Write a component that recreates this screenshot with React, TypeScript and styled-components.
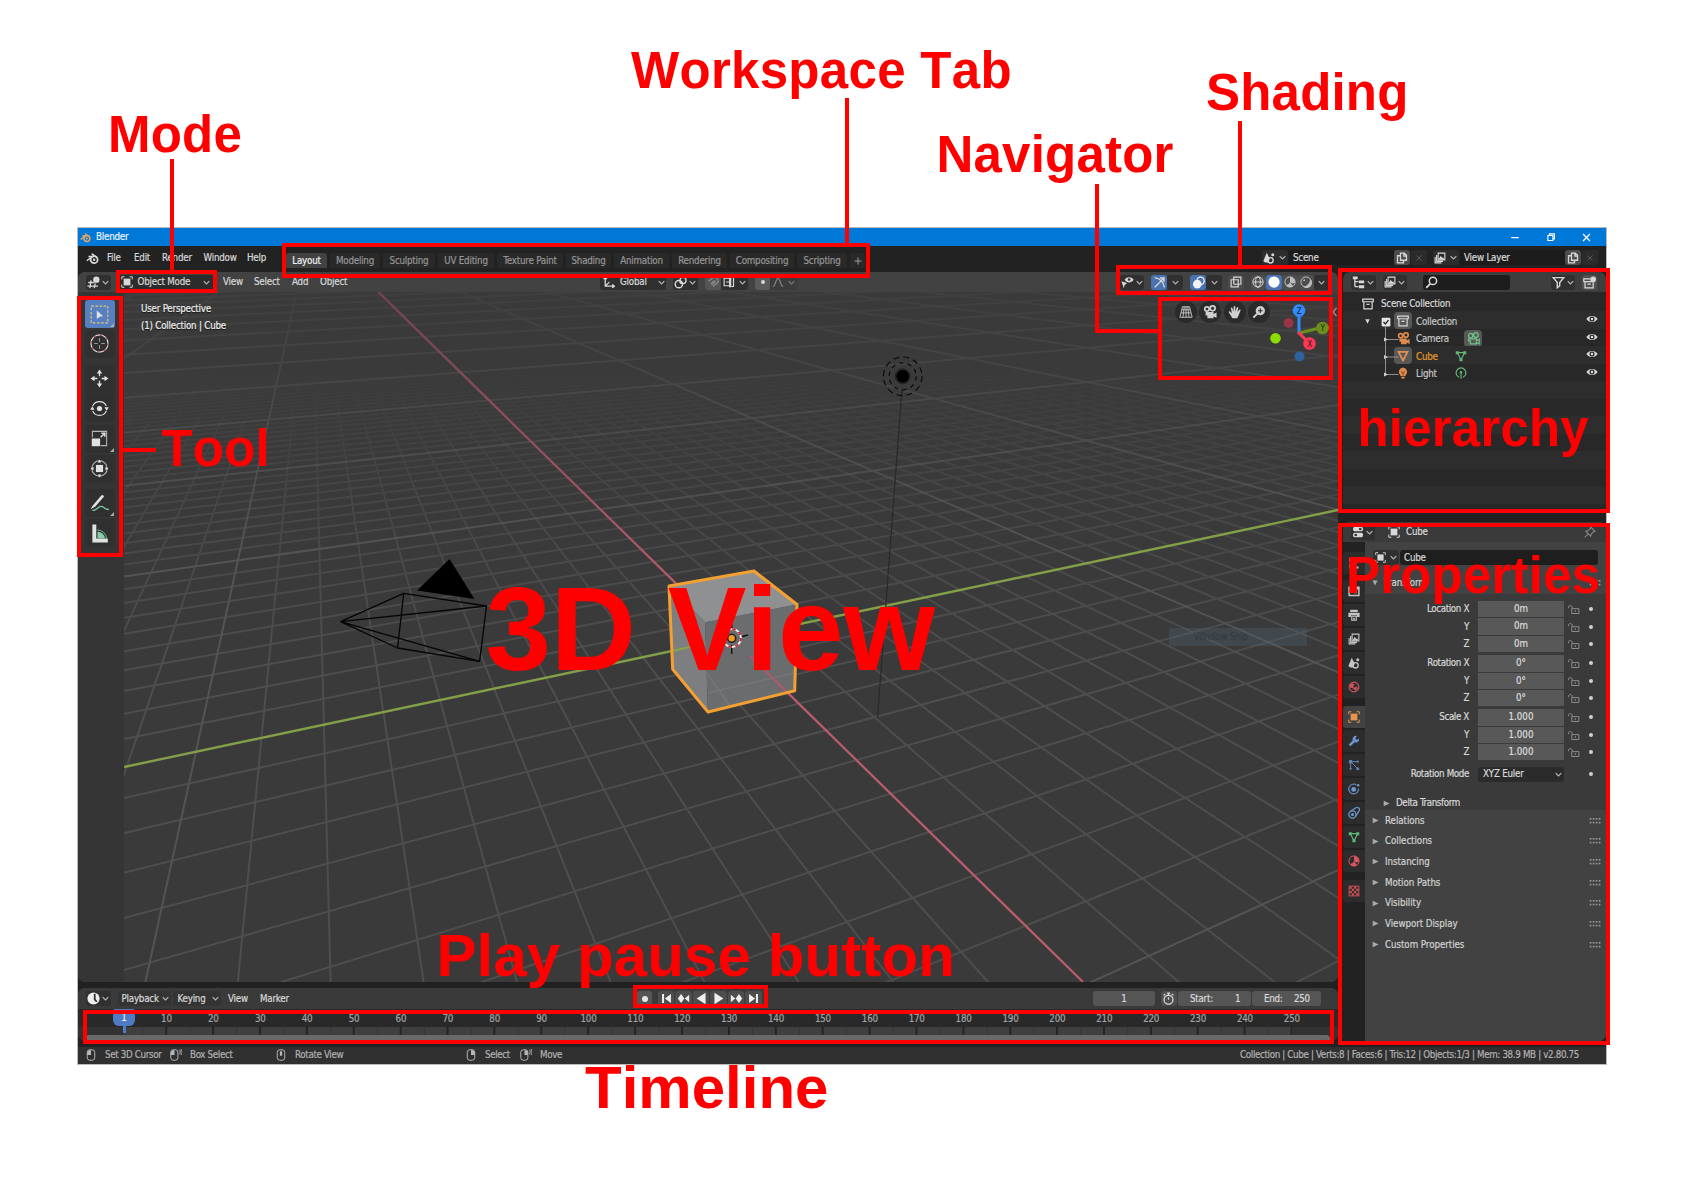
import React from "react";
import styled, { createGlobalStyle } from "styled-components";

const Global = createGlobalStyle`
  html, body { margin: 0; padding: 0; background: #fff; }
  * { box-sizing: border-box; }
`;

/* ---------- shell ---------- */

const Page = styled.div`
  position: relative;
  width: 1684px;
  height: 1190px;
  overflow: hidden;
  padding: 228px 0 0 78px;
  background: #fff;
`;

const AppWindow = styled.div`
  width: 1528px;
  height: 836px;
  display: flex;
  flex-direction: column;
  background: #212121;
  color: #d8d8d8;
  font-family: "DejaVu Sans Condensed", "DejaVu Sans", sans-serif;
  font-stretch: condensed;
  font-size: 9.7px;
  letter-spacing: -0.2px;
  line-height: 14px;
  white-space: nowrap;
  -webkit-text-stroke: 0.2px currentColor;
  box-shadow: 0 0 0 1px #b9b9b9;
`;

const TitleBar = styled.div`
  height: 18px;
  flex: none;
  display: flex;
  align-items: center;
  background: #0078d7;
  color: #e8f3fc;
  padding: 0 14.5px 0 2px;
`;

const TitleText = styled.span`
  flex: 1;
  padding-left: 5px;
`;

const WinButton = styled.span`
  width: 36px;
  display: flex;
  justify-content: flex-end;
`;

const TopBar = styled.div`
  height: 26px;
  flex: none;
  display: flex;
  align-items: flex-start;
  background: #222;
  padding: 4px 8px 0 8px;
`;

const Fixed = styled.span<{ w?: number; ml?: number }>`
  flex: none;
  width: ${(p) => (p.w ? p.w + "px" : "auto")};
  margin-left: ${(p) => p.ml || 0}px;
  display: flex;
  align-items: center;
  min-height: 16px;
`;

const Tab = styled.span<{ w: number; active?: boolean }>`
  flex: none;
  width: ${(p) => p.w}px;
  height: 15px;
  margin: 3px 3px 0 0;
  display: flex;
  align-items: center;
  justify-content: center;
  border-radius: 3px 3px 0 0;
  background: ${(p) => (p.active ? "#424242" : "#292929")};
  color: ${(p) => (p.active ? "#f0f0f0" : "#969696")};
`;

const Main = styled.div`
  height: 772px;
  flex: none;
  display: flex;
  gap: 5px;
`;

const LeftColumn = styled.div`
  width: 1260px;
  display: flex;
  flex-direction: column;
  gap: 6px;
`;

const RightColumn = styled.div`
  flex: 1;
  display: flex;
  flex-direction: column;
  gap: 11px;
`;

const Editor = styled.section<{ h: number; bg?: string }>`
  height: ${(p) => p.h}px;
  flex: none;
  display: flex;
  flex-direction: column;
  border-radius: 7px;
  overflow: hidden;
  background: ${(p) => p.bg || "#3a3a3a"};
`;

const Header = styled.div<{ h?: number; bg?: string }>`
  height: ${(p) => p.h || 20}px;
  flex: none;
  display: flex;
  align-items: center;
  background: ${(p) => p.bg || "#424242"};
  padding-left: 8px;
`;

const Chip = styled.span<{ w: number; ml?: number; bg?: string; j?: string; h?: number }>`
  flex: none;
  width: ${(p) => p.w}px;
  height: ${(p) => p.h || 15}px;
  margin-left: ${(p) => p.ml || 0}px;
  display: flex;
  align-items: center;
  justify-content: ${(p) => p.j || "space-around"};
  border-radius: 3px;
  background: ${(p) => p.bg || "#303030"};
  overflow: hidden;
`;

const Grow = styled.span`
  flex: 1;
`;

/* ---------- 3D viewport ---------- */

const ViewportBody = styled.div`
  flex: 1;
  display: flex;
`;

const Toolbar = styled.div`
  width: 46px;
  flex: none;
  display: flex;
  flex-direction: column;
  align-items: center;
  background: #353535;
  padding: 8px 3px 0 0;
`;

const ToolButton = styled.span<{ active?: boolean; mt?: number; more?: boolean }>`
  position: relative;
  flex: none;
  width: 30px;
  height: 28px;
  margin-top: ${(p) => p.mt || 0}px;
  display: flex;
  align-items: center;
  justify-content: center;
  border-radius: 3px;
  background: ${(p) => (p.active ? "#5680c2" : "#303030")};
  &::after {
    content: "";
    display: ${(p) => (p.more ? "block" : "none")};
    position: absolute;
    right: 1px;
    bottom: 1px;
    border-left: 4px solid transparent;
    border-bottom: 4px solid #a8a8a8;
  }
`;

const Canvas = styled.div`
  position: relative;
  width: 1214px;
  background: #3a3a3a;
  & > svg {
    display: block;
  }
`;

const ViewInfo = styled.div`
  position: absolute;
  left: 17px;
  top: 7.5px;
  line-height: 17.5px;
  color: #ededed;
  text-shadow: 0 1px 1px #111;
`;

const Ghost = styled.div`
  position: absolute;
  left: 1045px;
  top: 336px;
  width: 138px;
  height: 18px;
  padding-left: 25px;
  line-height: 18px;
  background: rgba(78, 102, 118, 0.32);
  color: #353d42;
`;

const NavButtons = styled.div`
  position: absolute;
  left: 1051px;
  top: 9px;
  display: flex;
  gap: 2.4px;
`;

const NavButton = styled.span`
  width: 22px;
  height: 22px;
  border-radius: 50%;
  background: #2a2a2a;
  display: flex;
  align-items: center;
  justify-content: center;
`;

/* ---------- timeline ---------- */

const Ruler = styled.div`
  height: 18px;
  flex: none;
  display: flex;
  padding: 1.5px 0 0 65px;
  background: #292929;
  color: #a2a2a2;
  align-items: center;
`;

const RulerMark = styled.span`
  flex: none;
  width: 46.9px;
  text-align: center;
`;

const TickStrip = styled.div`
  height: 8px;
  flex: none;
  display: flex;
  background: #323232;
  padding-left: 46px;
`;

const Ticks = styled.div`
  width: 1168px;
  background-color: #3f3f3f;
  background-image: linear-gradient(90deg, #242424 2px, transparent 2px),
    linear-gradient(90deg, #363636 1px, transparent 1px);
  background-size: 46.9px 100%, 46.9px 100%;
  background-position: 41.2px 0, 18.5px 0;
`;

const ScrollTrack = styled.div`
  flex: 1;
  padding: 0 8px 0 7px;
  background: #303030;
`;

const ScrollThumb = styled.div`
  height: 8px;
  border-radius: 4px;
  background: #696969;
`;

const Playhead = styled.div`
  position: absolute;
  left: 113px;
  top: 1009px;
  width: 22px;
  height: 17px;
  border-radius: 2px 2px 6px 6px;
  background: #4f7bc4;
  color: #fff;
  text-align: center;
  font: 9.7px/18px "DejaVu Sans Condensed", "DejaVu Sans", sans-serif;
  font-stretch: condensed;
  &::after {
    content: "";
    position: absolute;
    left: 9.5px;
    top: 16px;
    width: 3px;
    height: 8px;
    background: #4f7bc4;
  }
`;

const StatusBar = styled.div`
  height: 17px;
  margin-top: 3px;
  flex: none;
  display: flex;
  align-items: center;
  background: #303030;
  color: #b0b0b0;
  letter-spacing: -0.33px;
  padding: 0 27px 1px 7px;
`;

/* ---------- outliner ---------- */

const Row = styled.div<{ odd?: boolean; first?: boolean }>`
  height: ${(p) => (p.first ? 19 : 17.5)}px;
  flex: none;
  display: flex;
  align-items: center;
  padding: 4px 8px 0 0;
  background: ${(p) => (p.odd ? "#2d2d2d" : "#282828")};
`;

const Disclosure = styled.span<{ w: number }>`
  width: ${(p) => p.w}px;
  flex: none;
  display: flex;
  align-items: center;
  justify-content: flex-end;
`;

const Badge = styled.span<{ on?: boolean; ml?: number }>`
  flex: none;
  width: 18px;
  height: 17px;
  margin-left: ${(p) => p.ml || 0}px;
  margin-top: -2px;
  display: flex;
  align-items: center;
  justify-content: center;
  border-radius: 4px;
  background: ${(p) => (p.on ? "#585858" : "transparent")};
`;

const Name = styled.span<{ w: number; hot?: boolean }>`
  width: ${(p) => p.w}px;
  flex: none;
  margin-left: 4px;
  color: ${(p) => (p.hot ? "#e2992e" : "#c6c6c6")};
`;

const EyeBox = styled.span`
  display: flex;
  margin-top: -5px;
`;

/* ---------- properties ---------- */

const PropsBody = styled.div`
  flex: 1;
  display: flex;
`;

const PropTabs = styled.div`
  width: 22px;
  flex: none;
  display: flex;
  flex-direction: column;
  gap: 2px;
  background: #222;
  padding-top: 9.5px;
`;

const PropTab = styled.span<{ active?: boolean; mt?: number }>`
  flex: none;
  width: 22px;
  height: 22px;
  margin-top: ${(p) => p.mt || 0}px;
  display: flex;
  align-items: center;
  justify-content: center;
  border-radius: 3px 0 0 3px;
  background: ${(p) => (p.active ? "#424242" : "#2c2c2c")};
`;

const Panel = styled.div`
  flex: 1;
  display: flex;
  flex-direction: column;
  background: #424242;
  border-radius: 0 0 7px 0;
`;

const NameRow = styled.div`
  height: 31px;
  flex: none;
  display: flex;
  align-items: center;
  padding-left: 8px;
`;

const PanelHeader = styled.div`
  height: 20.7px;
  flex: none;
  display: flex;
  align-items: center;
  padding: 0 5px 0 6px;
  color: #d2d2d2;
  letter-spacing: -0.05px;
  gap: 5px;
`;

const TransformBody = styled.div`
  height: 216.5px;
  flex: none;
  background: #3a3a3a;
  padding-top: 7.5px;
  display: flex;
  flex-direction: column;
`;

const Group = styled.div`
  display: flex;
  flex-direction: column;
  gap: 1px;
  margin-bottom: 3.2px;
`;

const PropRow = styled.div<{ mt?: number }>`
  height: 16.3px;
  flex: none;
  margin-top: ${(p) => p.mt || 0}px;
  display: flex;
  align-items: center;
`;

const PropLabel = styled.span`
  width: 104px;
  text-align: right;
  flex: none;
  margin-right: 9px;
  letter-spacing: -0.35px;
`;

const Value = styled.span`
  width: 86px;
  height: 16.3px;
  line-height: 16px;
  flex: none;
  text-align: center;
  background: #585858;
  color: #dcdcdc;
  letter-spacing: 0;
`;

const Dot = styled.span`
  width: 4px;
  height: 4px;
  border-radius: 50%;
  background: #d0d0d0;
  margin-left: 9px;
`;

const SubPanel = styled.div`
  display: flex;
  flex: none;
  align-items: center;
  gap: 5px;
  margin-top: 11px;
  padding-left: 17px;
  height: 20px;
  letter-spacing: -0.35px;
`;

/* ---------- annotations drawn over the window ---------- */

const Callout = styled.div<{ x: number; base: number; size: number; ls?: number }>`
  position: absolute;
  left: ${(p) => p.x}px;
  top: ${(p) => p.base - p.size * 0.8465}px;
  font: bold ${(p) => p.size}px/1 "Liberation Sans", Arial, sans-serif;
  font-kerning: none;
  letter-spacing: ${(p) => p.ls ?? 0.2}px;
  color: #f00;
  white-space: nowrap;
`;

const Outline = styled.div<{ x: number; y: number; r: number; b: number }>`
  position: absolute;
  left: ${(p) => p.x}px;
  top: ${(p) => p.y}px;
  width: ${(p) => p.r - p.x}px;
  height: ${(p) => p.b - p.y}px;
  border: 4px solid #f00;
`;

const Leader = styled.div<{ x: number; y: number; r: number; b: number }>`
  position: absolute;
  left: ${(p) => p.x}px;
  top: ${(p) => p.y}px;
  width: ${(p) => p.r - p.x}px;
  height: ${(p) => p.b - p.y}px;
  background: #f00;
`;

/* ---------- icons ---------- */

type IconProps = { n: string; s?: number; c?: string };

const Checker = () => (
  <>
    <rect x="1.5" y="1.5" width="13" height="13" />
    {[0, 1, 2, 3].flatMap((r) =>
      [0, 1, 2, 3].map((k) =>
        (r + k) % 2 === 0 ? (
          <rect key={r + "-" + k} x={2 + k * 3} y={2 + r * 3} width="3" height="3" fill="currentColor" stroke="none" />
        ) : null
      )
    )}
  </>
);

const F = { fill: "currentColor", stroke: "none" };

const shapes: Record<string, React.ReactNode> = {
  chev: <path d="M3 5.500l5 5 5-5" strokeWidth="2.200" />,
  tri: <path d="M3 3l10.500 5L3 13z" {...F} />,
  triDown: <path d="M3 3h10l-5 10z" {...F} />,
  blender: (
    <>
      <circle cx="10" cy="9.500" r="4.300" strokeWidth="2.200" />
      <circle cx="10" cy="9.500" r="1.500" {...F} />
      <path d="M1 10.800L8.500 5M3 5.500h7M7 2l6 4.500" strokeWidth="1.800" />
    </>
  ),
  min: <path d="M2 9h12" strokeWidth="2" />,
  restore: <path d="M3 5.500h8v8H3zM5.500 5V3H13.500v8h-2" strokeWidth="1.800" />,
  close: <path d="M3 3l10 10M13 3L3 13" strokeWidth="1.800" />,
  plus: <path d="M8 1v14M1 8h14" strokeWidth="1.800" />,
  view3d: (
    <>
      <path d="M5 5.500L3.500 15M10 9l-1 6M1.500 8h7M0.500 12.500h13" strokeWidth="1.600" />
      <circle cx="11.500" cy="4.500" r="3.900" {...F} />
    </>
  ),
  object: (
    <>
      <rect x="3.500" y="3.500" width="9" height="9" {...F} />
      <path d="M1 4.500V1h3.500M11.500 1H15v3.500M15 11.500V15h-3.500M4.500 15H1v-3.500" />
    </>
  ),
  axes: <path d="M4 1.500v11h11M2 4l2-3 2 3M12.500 10.500l3 2-3 2M4 12.500l5-5" strokeWidth="1.600" />,
  pivot: (
    <>
      <circle cx="6" cy="10" r="4.500" strokeWidth="1.800" />
      <circle cx="11" cy="5.500" r="3.800" strokeWidth="1.600" />
      <circle cx="8.500" cy="8" r="1.500" {...F} />
    </>
  ),
  magnet: <path d="M2 7l5-4a4.500 4.500 0 0 1 6 7l-5 4M5 10l4-3a1 1 0 0 1 1.500 1.500L6 12" strokeWidth="1.600" />,
  snapinc: (
    <>
      <path d="M8 3H1.500v10H8M4 8h4M11 2h3v12h-3" strokeWidth="1.600" />
      <rect x="8" y="1" width="3" height="14" {...F} />
    </>
  ),
  dotc: <circle cx="8" cy="8" r="2.600" {...F} />,
  falloff: <path d="M1 14c4 0 4-11 7-11s3 11 7 11" strokeWidth="1.600" />,
  eyecur: (
    <>
      <path d="M4.500 4.500c3-4 8-4 11 0-3 4.500-8 4.500-11 0z" {...F} />
      <circle cx="10" cy="4.300" r="1.600" fill="#303030" stroke="none" />
      <path d="M0.500 6.500l7 2-3 2.500-1 4z" {...F} />
    </>
  ),
  gizmo: <path d="M2 2c6 1 11 5 12 12M2 14L13 3M8.500 2.500H13.500v5" strokeWidth="1.700" />,
  overlay: (
    <>
      <circle cx="6.500" cy="10" r="5.300" {...F} />
      <circle cx="10.500" cy="6" r="4.500" strokeWidth="1.600" />
    </>
  ),
  xray: <path d="M1.500 5h9.500v9.500H1.500zM5 11V1.500h9.500V11H5" strokeWidth="1.600" />,
  wire: (
    <>
      <circle cx="8" cy="8" r="6.800" />
      <ellipse cx="8" cy="8" rx="3.200" ry="6.800" />
      <path d="M1.500 8h13" />
    </>
  ),
  solid: <circle cx="8" cy="8" r="7.500" {...F} />,
  material: (
    <>
      <circle cx="8" cy="8" r="6.800" />
      <path d="M8 1.200A6.800 6.800 0 0 1 14.800 8c-2 3-5 2-6.800 0zM8 8c-1 3-4 4-5.500 4A6.800 6.800 0 0 0 12 13.500z" {...F} />
    </>
  ),
  rendered: (
    <>
      <circle cx="8" cy="8" r="6.800" />
      <path d="M14 4a7 7 0 0 1-10 10c5 0 9-4 10-10z" {...F} />
      <circle cx="5.500" cy="5.500" r="1.300" {...F} />
    </>
  ),
  scene: (
    <>
      <path d="M5 1l4 8-2 5H3L0.500 12z" {...F} />
      <circle cx="10" cy="11" r="3.600" strokeWidth="1.800" />
      <circle cx="13" cy="3.500" r="2" {...F} />
    </>
  ),
  copy: <path d="M6 1.500h5l3 3v6.500H6zM5.500 5H2v9.500h8V12M10.500 2v3.500H14" strokeWidth="1.700" />,
  layers: (
    <>
      <path d="M5.500 1.500h9v9h-9zM3.500 4v8.500H12M1.500 6.500v8H10" strokeWidth="1.500" />
      <path d="M6 10l3-5 2 3 1-1 2 3z" {...F} />
    </>
  ),
  outliner: (
    <>
      <path d="M3.500 2v11M3.500 7H8M3.500 13H8" strokeWidth="1.600" />
      <path d="M1 0.500h6v3.500H1zM8.500 5.500H15v3.500H8.500zM8.500 11.500H15v3.500H8.500z" {...F} />
    </>
  ),
  search: (
    <>
      <circle cx="9.800" cy="6" r="4.500" strokeWidth="1.900" />
      <path d="M6.500 9.500L1.500 14.500" strokeWidth="2.200" />
    </>
  ),
  filter: <path d="M1.500 2h13l-5 6v4l-3 2.500V8z" strokeWidth="1.700" />,
  box: <path d="M1 1.500h14v3.500H1zM2.500 5v9.500h11V5M6 8.500h4" strokeWidth="1.600" />,
  boxnew: (
    <>
      <path d="M9 3.500H1v3.500h13M2.500 7v7.500h10V8M5.500 10h4" strokeWidth="1.500" />
      <circle cx="12.500" cy="4" r="3.500" {...F} />
    </>
  ),
  check: (
    <>
      <rect x="1" y="1" width="14" height="14" rx="2" {...F} />
      <path d="M4 8l3 3 5-6" stroke="#282828" strokeWidth="2.200" />
    </>
  ),
  eye: (
    <>
      <path d="M0.500 8C4 2.500 12 2.500 15.500 8 12 13.500 4 13.500 0.500 8z" {...F} />
      <circle cx="8" cy="8" r="3.400" fill="#2a2a2a" stroke="none" />
      <circle cx="8" cy="8" r="1.700" {...F} />
    </>
  ),
  camera: (
    <>
      <circle cx="4.500" cy="4.500" r="2.500" strokeWidth="2" />
      <circle cx="11" cy="3.800" r="2.800" strokeWidth="2" />
      <path d="M3 8h9v2.200l3.500-1.500v6L12 13v2H5v-3H3z" {...F} />
    </>
  ),
  cameraData: (
    <>
      <circle cx="4.500" cy="4.500" r="2.700" strokeWidth="1.500" />
      <circle cx="11" cy="3.800" r="2.900" strokeWidth="1.500" />
      <path d="M2 8.500h9.500v2.500l3.500-2v5.500l-3.500-1.500v1.500H4V11H2z" strokeWidth="1.500" />
    </>
  ),
  cone: <path d="M2 2.500h12L8 14z" strokeWidth="2.400" />,
  mesh: (
    <>
      <path d="M3 3.500h10L8 13z" strokeWidth="1.500" />
      <path d="M1 1.500h4v4H1zM11 1.500h4v4h-4zM6 11h4v4H6z" {...F} />
    </>
  ),
  bulb: (
    <>
      <path d="M8 0.500a6 6 0 0 1 3.500 10.500v1h-7v-1A6 6 0 0 1 8 0.500zM5.500 13h5v1l-1.500 1.500h-2L5.500 14z" {...F} />
      <path d="M5.500 6l2.500 2 2.500-2M8 8v3.500" stroke="#5b3319" strokeWidth="1" />
    </>
  ),
  point: (
    <>
      <path d="M5.500 13.700a6.500 6.500 0 1 1 5 0M8 8v7.500" strokeWidth="1.500" />
      <circle cx="8" cy="7" r="1.600" {...F} />
    </>
  ),
  props: (
    <>
      <rect x="1.500" y="1" width="13" height="6" rx="2" {...F} />
      <rect x="1.500" y="9" width="13" height="6" rx="2" {...F} />
      <circle cx="5" cy="12" r="1.800" fill="#303030" stroke="none" />
      <circle cx="11" cy="4" r="1.800" fill="#303030" stroke="none" />
    </>
  ),
  pin: <path d="M9 1.500l5.500 5.500-2 .5L9.500 11l-.5 2.500L2.500 7l2.500-.500L8.500 3.500zM5.500 10.500L1 15" strokeWidth="1.400" />,
  tool: <path d="M3 1v6M3 9v6M10 2l3 3-3 3M8 14h6" strokeWidth="2.400" />,
  render: (
    <>
      <rect x="1.500" y="3" width="13" height="11" strokeWidth="2" />
      <path d="M1 3h14v3H1zM8 8h4v3H8z" {...F} />
    </>
  ),
  printer: (
    <>
      <path d="M3 1h10v3H3zM0.500 5h15v5.500H12V8H4v2.500H0.500z" {...F} />
      <path d="M5 9.500h6V15H5z" strokeWidth="1.500" />
      <path d="M6 14l2-3 2 3z" {...F} />
    </>
  ),
  world: (
    <>
      <circle cx="8" cy="8" r="6.500" strokeWidth="1.600" />
      <path d="M2 6l3-3 4 1-2 3 1 2 4-2 1 3-3 3-3-3-4-1z" {...F} />
    </>
  ),
  wrench: <path d="M14.800 4.500l-3 2-2-2 2-3.200a4.500 4.500 0 0 0-5.500 6L1 12.500 3.500 15l5.300-5.300a4.500 4.500 0 0 0 6-5.200z" {...F} />,
  particles: (
    <>
      <path d="M3.500 3.500l9 9M3.500 3.500v9M3.500 3.500h10" strokeWidth="1.300" />
      <circle cx="3.500" cy="3.500" r="2.600" {...F} />
      <circle cx="13" cy="3.500" r="1.500" {...F} />
      <circle cx="13" cy="13" r="2" {...F} />
      <circle cx="3.500" cy="13" r="1.500" {...F} />
    </>
  ),
  physics: (
    <>
      <path d="M11 2.500A6.500 6.500 0 1 0 14 7.500" strokeWidth="1.400" />
      <circle cx="7.500" cy="8.500" r="3.200" {...F} />
      <circle cx="13.500" cy="3" r="1.700" {...F} />
    </>
  ),
  constraint: (
    <>
      <circle cx="6" cy="10" r="4.800" strokeWidth="1.800" />
      <circle cx="6" cy="10" r="2" {...F} />
      <path d="M3 6l7-4.500a3 3 0 0 1 4.500 4L10.500 12" strokeWidth="1.600" />
    </>
  ),
  checker: <Checker />,
  lock: (
    <>
      <path d="M5.500 7V5a2.800 2.800 0 0 0-5 0v2M5 7.500h9.500v6.500H5z" />
      <path d="M9.700 9.500v2.500" />
    </>
  ),
  grip: (
    <>
      {[0, 4, 8, 12].flatMap((x) => [4, 9].map((y) => <rect key={x + "_" + y} x={x + 1} y={y} width="2.200" height="2.200" {...F} />))}
    </>
  ),
  clock: (
    <>
      <circle cx="8" cy="8" r="7.500" {...F} />
      <path d="M9.500 2v7L12 12" stroke="#303030" strokeWidth="2.200" />
    </>
  ),
  stopwatch: (
    <>
      <circle cx="8" cy="9.500" r="5.500" strokeWidth="1.600" />
      <path d="M8 9.500V6.500M6 1.500h4M8 1.500V4M2 4l2-1.500M14 4l-2-1.500" strokeWidth="1.600" />
    </>
  ),
  rec: <circle cx="8" cy="8" r="4.800" {...F} />,
  jumpStart: <path d="M2.500 2.500h2.500v11H2.500zM13.500 2.500v11L6 8z" {...F} />,
  prevKey: <path d="M5 2.500L9 8l-4 5.500L1 8zM15 3.500v9L9.500 8z" {...F} />,
  playRev: <path d="M13 1v14L2 8z" {...F} />,
  play: <path d="M3 1v14l11-7z" {...F} />,
  nextKey: <path d="M11 2.500L7 8l4 5.500L15 8zM1 3.500v9L6.500 8z" {...F} />,
  jumpEnd: <path d="M13.500 2.500H11v11h2.500zM2.500 2.500v11L10 8z" {...F} />,
  mouseL: (
    <>
      <rect x="3" y="1" width="10" height="14" rx="3.500" />
      <path d="M3 4.500L5 1.500H8V8H3z" {...F} />
    </>
  ),
  mouseR: (
    <>
      <rect x="3" y="1" width="10" height="14" rx="3.500" />
      <path d="M13 4.500L11 1.500H8V8h5z" {...F} />
    </>
  ),
  mouseM: (
    <>
      <rect x="3" y="1" width="10" height="14" rx="3.500" />
      <rect x="6.500" y="3" width="3" height="6" {...F} />
    </>
  ),
  mouseLd: (
    <>
      <rect x="1" y="1" width="9.500" height="14" rx="3.500" />
      <path d="M1 4.500L3 1.500H6V8H1z" {...F} />
      <path d="M12.500 1c1.500 2 1.500 4 0 6M14.500 0c2 3 2 6 0 8" />
    </>
  ),
  mouseRd: (
    <>
      <rect x="1" y="1" width="9.500" height="14" rx="3.500" />
      <path d="M10.500 4.500L9 1.500H6V8h4.500z" {...F} />
      <path d="M12.500 1c1.500 2 1.500 4 0 6M14.500 0c2 3 2 6 0 8" />
    </>
  ),
  select: (
    <>
      <rect x="1" y="1" width="14" height="14" stroke="#e6c673" strokeWidth="1" strokeDasharray="2.200 1.300" />
      <path d="M5.700 4.500l5.300 5-2.500.2-2.800 2z" {...F} />
    </>
  ),
  cursor: (
    <>
      <circle cx="8" cy="8" r="7.200" strokeWidth="1" />
      <circle cx="8" cy="8" r="7.200" stroke="#a0484c" strokeWidth="1.100" strokeDasharray="2 3.655" />
      <path d="M8 3.500v3M8 9.500v3M3.500 8h3M9.500 8h3" strokeWidth=".7" stroke="#a8b8ae" />
    </>
  ),
  move: (
    <>
      <path d="M8 0.500l2.300 3.300H5.700zM8 15.500l2.300-3.300H5.700zM0.500 8l3.300-2.300v4.600zM15.500 8l-3.300-2.300v4.600z" {...F} />
      <path d="M8 3v3.200M8 9.800V13M3 8h3.200M9.800 8H13" strokeWidth="1.100" />
    </>
  ),
  rotate: (
    <>
      <circle cx="8" cy="8" r="2.200" {...F} />
      <path d="M2.200 6a6.300 6.300 0 0 1 11.600 0M2.200 10a6.300 6.300 0 0 0 11.600 0" strokeWidth="1" />
      <path d="M0.200 9l1.800-2.800L3.800 9zM15.800 7l-1.800 2.800L12.200 7z" {...F} />
    </>
  ),
  scale: (
    <>
      <path d="M2 7V2h12v12H9" strokeWidth=".9" stroke="#b5b5b5" />
      <rect x="1.500" y="8" width="7" height="6.500" {...F} />
      <path d="M9 7l3-3M9.500 3.500h3v3" strokeWidth="1.200" />
    </>
  ),
  transform: (
    <>
      <circle cx="8" cy="8" r="6.500" strokeWidth=".9" stroke="#b5b5b5" />
      <rect x="5" y="5" width="6" height="6" {...F} />
      <path d="M8 0.500l1.500 2.500h-3zM8 15.500l1.500-2.500h-3zM0.500 8l2.500-1.500v3zM15.500 8l-2.500-1.500v3z" {...F} />
    </>
  ),
  annotate: (
    <>
      <path d="M0.500 12.800L2 10 9.500 1.200q1.200-1 2.300.8L4.500 10.500z" {...F} />
      <path d="M2 13.800c4 .5 4.500-3.800 7.500-3.300s3 3 6.500 2.500" stroke="#7cc7a2" strokeWidth="1.100" />
    </>
  ),
  measure: (
    <>
      <path d="M6.300 12V6.500A6 6 0 0 1 12.500 12z" fill="#83cfaa" stroke="none" />
      <path d="M6 5a8 8 0 0 1 8 7" stroke="#83cfaa" strokeWidth=".7" />
      <path d="M2 0.500h3.300v11.800H15V15.500H2z" {...F} />
    </>
  ),
  persp: <path d="M4 2h8l3 12H1zM2.500 9h11M3.300 5.500h9.400M8 2v12M6 2l-1.500 12M10 2l1.500 12" strokeWidth="1" />,
  hand: (
    <path d="M5 15l-4-6.500c-.5-1.200 1-1.600 1.700-.800L4.500 9.500 3.300 3.800c-.2-1.200 1.300-1.500 1.700-.4L6.300 7.500 6.500 2c.1-1.200 1.700-1.200 1.800 0L8.500 7.300 10 2.800c.4-1.100 1.900-.7 1.700.5L10.900 8l2-2.500c.7-.9 1.900-.2 1.400.8L12 12l-1.500 3z" {...F} />
  ),
  zoom: (
    <>
      <circle cx="9.500" cy="6.500" r="5.300" {...F} />
      <path d="M6 10l-4.500 4.500" strokeWidth="2.200" />
      <path d="M9.500 3.800v5.400M6.800 6.500h5.400" stroke="#2a2a2a" strokeWidth="1.200" />
    </>
  ),
};

const Icon = ({ n, s = 12, c = "#d8d8d8" }: IconProps) => (
  <svg width={s} height={s} viewBox="0 0 16 16" color={c} fill="none" stroke="currentColor" strokeWidth="1.300">
    {shapes[n]}
  </svg>
);

const Chev = () => <Icon n="chev" s={9} c="#b4b4b4" />;

/* ---------- scene drawing ---------- */

type Pt = [number, number];
const ORIGIN: Pt = [731.7, 638.3];
const VANISH_X: Pt = [311, 227];
const VANISH_Y: Pt = [2830, 194.3];

function ray(n: number, along: "x" | "y") {
  const k = along === "x" ? 0.02034 : -0.0457;
  const across = along === "x" ? VANISH_Y : VANISH_X;
  const from = along === "x" ? VANISH_X : VANISH_Y;
  const w = 1 + k * n;
  if (Math.abs(w) < 0.001) return null;
  const px = (ORIGIN[0] + k * n * across[0]) / w;
  const py = (ORIGIN[1] + k * n * across[1]) / w;
  const sign = w > 0 ? 1 : -1;
  const dx = (px - from[0]) * sign;
  const dy = (py - from[1]) * sign;
  const t = 6000 / Math.hypot(dx, dy);
  return { x1: from[0], y1: from[1], x2: from[0] + dx * t, y2: from[1] + dy * t };
}

const minor: React.ReactNode[] = [];
const major: React.ReactNode[] = [];
for (let i = -90; i <= 90; i++) {
  if (i % 10 === 0) continue;
  const a = ray(i, "x");
  const b = i < 21 ? ray(i, "y") : null;
  if (a) minor.push(<line key={"a" + i} {...a} />);
  if (b) minor.push(<line key={"b" + i} {...b} />);
}
for (let i = -400; i <= 400; i += 10) {
  if (i === 0) continue;
  const a = ray(i, "x");
  const b = i < 21 ? ray(i, "y") : null;
  if (a) major.push(<line key={"a" + i} {...a} />);
  if (b) major.push(<line key={"b" + i} {...b} />);
}

const Scene = () => (
  <svg width="1214" height="690" viewBox="124 292 1214 690">
    <defs>
      <linearGradient id="fadeMinor" gradientUnits="userSpaceOnUse" x1="0" y1="360" x2="0" y2="660">
        <stop offset="0" stopColor="#fff" stopOpacity="0" />
        <stop offset="0.2" stopColor="#fff" stopOpacity="0.3" />
        <stop offset="0.5" stopColor="#fff" stopOpacity="0.65" />
        <stop offset="1" stopColor="#fff" stopOpacity="1" />
      </linearGradient>
      <linearGradient id="fadeMajor" gradientUnits="userSpaceOnUse" x1="0" y1="285" x2="0" y2="560">
        <stop offset="0" stopColor="#fff" stopOpacity="0.2" />
        <stop offset="0.5" stopColor="#fff" stopOpacity="0.6" />
        <stop offset="1" stopColor="#fff" stopOpacity="1" />
      </linearGradient>
      <mask id="mMinor" maskUnits="userSpaceOnUse" x="124" y="292" width="1214" height="690">
        <rect x="124" y="292" width="1214" height="690" fill="url(#fadeMinor)" />
      </mask>
      <mask id="mMajor" maskUnits="userSpaceOnUse" x="124" y="292" width="1214" height="690">
        <rect x="124" y="292" width="1214" height="690" fill="url(#fadeMajor)" />
      </mask>
      <linearGradient id="redAxis" gradientUnits="userSpaceOnUse" x1="380" y1="293" x2="700" y2="607">
        <stop offset="0" stopColor="#744450" />
        <stop offset="1" stopColor="#b95c6e" />
      </linearGradient>
    </defs>
    <g mask="url(#mMinor)" stroke="#4e4e4e" strokeWidth="2">
      {minor}
    </g>
    <g mask="url(#mMajor)" stroke="#545454" strokeWidth="2">
      {major}
    </g>
    <line x1="311" y1="226" x2="1083" y2="982" stroke="url(#redAxis)" strokeWidth="2.200" />
    <line x1="124" y1="767" x2="1338" y2="510" stroke="#839f49" strokeWidth="2.400" />
    <line x1="902" y1="388" x2="877.500" y2="718" stroke="#292929" strokeWidth="1.200" />
    <circle cx="902.700" cy="376.300" r="6.500" fill="#000" />
    <circle cx="902.700" cy="376.300" r="7.500" fill="none" stroke="#111" strokeWidth=".7" />
    <circle cx="902.700" cy="376.300" r="13.500" fill="none" stroke="#0c0c0c" strokeWidth="1.200" strokeDasharray="4.500 4" />
    <circle cx="902.700" cy="376.300" r="19.300" fill="none" stroke="#0c0c0c" strokeWidth="1.200" strokeDasharray="6 4.100" />
    <g fill="none" stroke="#050505" strokeWidth="1.300" strokeLinejoin="round">
      <path d="M403.700 593.300L486.500 606L479.600 661.300L397.600 648Z" />
      <path d="M340.500 621.700L403.700 593.300M340.500 621.700L486.500 606M340.500 621.700L479.600 661.300M340.500 621.700L397.600 648" />
    </g>
    <path d="M417 590.500L449.600 559L474.500 599Z" fill="#000" />
    <path d="M669 586L754 571L797 604.500L705 622.300Z" fill="#8e9092" />
    <path d="M669 586L705 622.300L708 712L672.700 669.300Z" fill="#7c7e80" />
    <path d="M705 622.300L797 604.500L794.700 690.700L708 712Z" fill="#6b6c6e" />
    <path d="M708 693L794 673M730 706L706 672" stroke="#757678" strokeWidth="1.600" />
    <line x1="672" y1="651" x2="690" y2="647" stroke="#86a648" strokeWidth="2" />
    <line x1="750" y1="656" x2="790" y2="695" stroke="#b4566a" strokeWidth="2" />
    <path
      d="M669 586L754 571L797 604.500L794.700 690.700L708 712L672.700 669.300Z"
      fill="none"
      stroke="#f3a033"
      strokeWidth="3"
      strokeLinejoin="round"
    />
    <path d="M731.700 621v9M731.700 645v9M715 638h9M740 637l8-2" stroke="#111" strokeWidth="1.400" />
    <circle cx="732" cy="638" r="9" fill="none" stroke="#f2f2f2" strokeWidth="2" />
    <circle cx="732" cy="638" r="9" fill="none" stroke="#c4283c" strokeWidth="2" strokeDasharray="3.500 3.570" />
    <circle cx="731.700" cy="638.300" r="4" fill="#f59a23" stroke="#222" strokeWidth="1.600" />

    <g transform="translate(1 0)">
      <g strokeWidth="3" strokeLinecap="round">
        <line x1="1298" y1="333" x2="1298" y2="312" stroke="#2f8bff" />
        <line x1="1298" y1="333" x2="1319" y2="328" stroke="#6b8f1c" />
        <line x1="1298" y1="333" x2="1307" y2="342" stroke="#ff3655" />
      </g>
      <circle cx="1287.600" cy="323" r="5" fill="#993447" />
      <circle cx="1274.500" cy="338.200" r="5.300" fill="#8bdc00" />
      <circle cx="1298.500" cy="356.500" r="5" fill="#2f629f" />
      <circle cx="1298" cy="310.500" r="6.300" fill="#2f8bff" />
      <circle cx="1321.500" cy="328" r="6.300" fill="#6b8f1c" />
      <circle cx="1308.500" cy="343.500" r="6.300" fill="#ff3655" />
      <g fontFamily="DejaVu Sans, sans-serif" fontSize="8" fill="#1a1a1a" textAnchor="middle">
        <text x="1298" y="313.500">Z</text>
        <text x="1321.500" y="331">Y</text>
        <text x="1308.500" y="346.500">X</text>
      </g>
    </g>
    <path d="M1336.500 308l-3.500 4 3.500 4" fill="none" stroke="#999" strokeWidth="1.200" />
  </svg>
);

/* ---------- data ---------- */

const menus: [string, number][] = [
  ["File", 27],
  ["Edit", 28],
  ["Render", 41.5],
  ["Window", 43.5],
  ["Help", 39],
];

const tabs: [string, number][] = [
  ["Layout", 41],
  ["Modeling", 50],
  ["Sculpting", 52],
  ["UV Editing", 56],
  ["Texture Paint", 66],
  ["Shading", 45],
  ["Animation", 55],
  ["Rendering", 55],
  ["Compositing", 64],
  ["Scripting", 50],
];

const tools = [
  { n: "select", mt: 0, active: true, more: true },
  { n: "cursor", mt: 1.5 },
  { n: "move", mt: 7 },
  { n: "rotate", mt: 1.5 },
  { n: "scale", mt: 2.5, more: true },
  { n: "transform", mt: 2 },
  { n: "annotate", mt: 6.5, more: true },
  { n: "measure", mt: 2 },
];

const GREY = "#c4c4c4";
const propTabs = [
  { n: "tool", c: GREY },
  { n: "render", c: GREY, mt: 4 },
  { n: "printer", c: GREY },
  { n: "layers", c: GREY },
  { n: "scene", c: GREY },
  { n: "world", c: "#c9525c" },
  { n: "object", c: "#e8964f", active: true, mt: 6 },
  { n: "wrench", c: "#6d92cf" },
  { n: "particles", c: "#5f86bd" },
  { n: "physics", c: "#6f97cf" },
  { n: "constraint", c: "#6f97cf" },
  { n: "mesh", c: "#63b877" },
  { n: "material", c: "#d9555c" },
  { n: "checker", c: "#cf5058", mt: 6 },
];

const fields: [string, string][][] = [
  [["Location X", "0m"], ["Y", "0m"], ["Z", "0m"]],
  [["Rotation X", "0°"], ["Y", "0°"], ["Z", "0°"]],
  [["Scale X", "1.000"], ["Y", "1.000"], ["Z", "1.000"]],
];

const panels = [
  "Relations",
  "Collections",
  "Instancing",
  "Motion Paths",
  "Visibility",
  "Viewport Display",
  "Custom Properties",
];

/* ---------- sections ---------- */

const TopMenu = () => (
  <TopBar>
    <Fixed w={21}>
      <Icon n="blender" s={13} />
    </Fixed>
    {menus.map(([t, w]) => (
      <Fixed key={t} w={w}>
        {t}
      </Fixed>
    ))}
    {tabs.map(([t, w], i) => (
      <Tab key={t} w={w} active={i === 0}>
        {t}
      </Tab>
    ))}
    <Tab w={15}>
      <Icon n="plus" s={8} c="#aaa" />
    </Tab>
    <Grow />
    <Chip w={26} bg="#2d2d2d">
      <Icon n="scene" />
      <Chev />
    </Chip>
    <Chip w={105} ml={1} bg="#1c1c1c" j="flex-start">
      <Fixed ml={4}>Scene</Fixed>
    </Chip>
    <Chip w={16} bg="#4c4c4c">
      <Icon n="copy" s={12} />
    </Chip>
    <Chip w={16} ml={1} bg="#2b2b2b">
      <Icon n="close" s={8} c="#5e5e5e" />
    </Chip>
    <Chip w={26} ml={6} bg="#2d2d2d">
      <Icon n="layers" />
      <Chev />
    </Chip>
    <Chip w={105} ml={1} bg="#1c1c1c" j="flex-start">
      <Fixed ml={4}>View Layer</Fixed>
    </Chip>
    <Chip w={16} bg="#4c4c4c">
      <Icon n="copy" s={12} />
    </Chip>
    <Chip w={16} ml={1} bg="#2b2b2b">
      <Icon n="close" s={8} c="#5e5e5e" />
    </Chip>
  </TopBar>
);

const Viewport = () => (
  <Editor h={710}>
    <Header>
      <Chip w={25}>
        <Icon n="view3d" s={13} />
        <Chev />
      </Chip>
      <Chip w={96} ml={7} bg="#2c2c2c" j="flex-start">
        <Fixed w={17} ml={2.5}>
          <Icon n="object" />
        </Fixed>
        <Fixed w={64}>Object Mode</Fixed>
        <Chev />
      </Chip>
      <Fixed w={31} ml={9}>View</Fixed>
      <Fixed w={38}>Select</Fixed>
      <Fixed w={28}>Add</Fixed>
      <Fixed w={280}>Object</Fixed>
      <Chip w={66} j="flex-start">
        <Fixed w={18} ml={2}>
          <Icon n="axes" s={13} />
        </Fixed>
        <Fixed w={37}>Global</Fixed>
        <Chev />
      </Chip>
      <Chip w={25} ml={7}>
        <Icon n="pivot" s={13} />
        <Chev />
      </Chip>
      <Chip w={16} ml={7} bg="#555">
        <Icon n="magnet" s={12} c="#8d8d8d" />
      </Chip>
      <Chip w={27}>
        <Icon n="snapinc" s={12} />
        <Chev />
      </Chip>
      <Chip w={15} ml={7} bg="#5b5b5b">
        <Icon n="dotc" />
      </Chip>
      <Chip w={28} bg="#3c3c3c">
        <Icon n="falloff" c="#888" />
        <Icon n="chev" s={9} c="#777" />
      </Chip>
      <Fixed w={322} />
      <Chip w={24}>
        <Icon n="eyecur" s={13} />
        <Chev />
      </Chip>
      <Chip w={16} ml={7} bg="#4a72b0">
        <Icon n="gizmo" s={13} />
      </Chip>
      <Chip w={16}>
        <Chev />
      </Chip>
      <Chip w={16} ml={7} bg="#4a72b0">
        <Icon n="overlay" s={13} c="#f2f2f2" />
      </Chip>
      <Chip w={16}>
        <Chev />
      </Chip>
      <Chip w={16} ml={6} bg="#4b4b4b">
        <Icon n="xray" s={12} />
      </Chip>
      <Chip w={15.5} ml={6.5} bg="#4e4e4e">
        <Icon n="wire" s={12} />
      </Chip>
      <Chip w={16} bg="#4a72b0">
        <Icon n="solid" s={12} c="#fff" />
      </Chip>
      <Chip w={16} bg="#4e4e4e">
        <Icon n="material" s={12} c="#bdbdbd" />
      </Chip>
      <Chip w={16} bg="#4e4e4e">
        <Icon n="rendered" s={12} c="#bdbdbd" />
      </Chip>
      <Chip w={15}>
        <Chev />
      </Chip>
    </Header>
    <ViewportBody>
      <Toolbar>
        {tools.map((t) => (
          <ToolButton key={t.n} active={t.active} mt={t.mt} more={t.more}>
            <Icon n={t.n} s={19} c="#e2e2e2" />
          </ToolButton>
        ))}
      </Toolbar>
      <Canvas>
        <Scene />
        <ViewInfo>
          User Perspective
          <br />
          (1) Collection | Cube
        </ViewInfo>
        <NavButtons>
          {["persp", "camera", "hand", "zoom"].map((n) => (
            <NavButton key={n}>
              <Icon n={n} s={14} c="#d0d0d0" />
            </NavButton>
          ))}
        </NavButtons>
        <Ghost>Window Snip</Ghost>
      </Canvas>
    </ViewportBody>
  </Editor>
);

const Timeline = () => (
  <Editor h={53}>
    <Header h={21} bg="#3a3a3a">
      <Chip w={25}>
        <Icon n="clock" s={13} c="#eee" />
        <Chev />
      </Chip>
      <Chip w={53} ml={7} bg="#333" j="flex-start">
        <Fixed w={39.5} ml={3.5}>Playback</Fixed>
        <Chev />
      </Chip>
      <Chip w={48} ml={1.5} bg="#333" j="flex-start">
        <Fixed w={33} ml={5}>Keying</Fixed>
        <Chev />
      </Chip>
      <Fixed w={32} ml={7.5}>View</Fixed>
      <Fixed w={377}>Marker</Fixed>
      <Chip w={15} bg="#555">
        <Icon n="rec" s={10} c="#e6e6e6" />
      </Chip>
      <Fixed w={5} />
      {["jumpStart", "prevKey", "playRev", "play", "nextKey", "jumpEnd"].map((n) => (
        <Chip key={n} w={16.8} ml={0.7} bg="#4d4d4d">
          <Icon n={n} c="#eee" s={13} />
        </Chip>
      ))}
      <Fixed w={331} />
      <Chip w={62} bg="#555">1</Chip>
      <Chip w={16} ml={6} bg="#4d4d4d">
        <Icon n="stopwatch" s={13} />
      </Chip>
      <Chip w={73} ml={1} bg="#555" j="flex-start">
        <Fixed w={45} ml={12}>Start:</Fixed>1
      </Chip>
      <Chip w={69} ml={1} bg="#555" j="flex-start">
        <Fixed w={30} ml={12}>End:</Fixed>250
      </Chip>
    </Header>
    <Ruler>
      {Array.from({ length: 25 }, (_, i) => (
        <RulerMark key={i}>{(i + 1) * 10}</RulerMark>
      ))}
    </Ruler>
    <TickStrip>
      <Ticks />
    </TickStrip>
    <ScrollTrack>
      <ScrollThumb />
    </ScrollTrack>
  </Editor>
);

const Eye = () => (
  <EyeBox>
    <Icon n="eye" s={12} c="#dcdcdc" />
  </EyeBox>
);

const Outliner = () => (
  <Editor h={239} bg="#282828">
    <Header bg="#3e3e3e">
      <Chip w={25}>
        <Icon n="outliner" s={13} />
        <Chev />
      </Chip>
      <Chip w={24} ml={7}>
        <Icon n="layers" s={12} />
        <Chev />
      </Chip>
      <Chip w={87} ml={16} bg="#1d1d1d" j="flex-start">
        <Fixed ml={2}>
          <Icon n="search" s={13} />
        </Fixed>
      </Chip>
      <Chip w={24} ml={41}>
        <Icon n="filter" s={13} />
        <Chev />
      </Chip>
      <Chip w={15} ml={7} bg="#505050">
        <Icon n="boxnew" s={13} />
      </Chip>
    </Header>
    <Row first>
      <Disclosure w={31}>
        <Icon n="box" s={12} />
      </Disclosure>
      <Fixed ml={7}>Scene Collection</Fixed>
    </Row>
    <Row odd>
      <Disclosure w={28}>
        <Icon n="triDown" s={7} />
      </Disclosure>
      <Disclosure w={20}>
        <Icon n="check" s={10} c="#e4e4e4" />
      </Disclosure>
      <Badge on ml={3}>
        <Icon n="box" s={12} />
      </Badge>
      <Name w={100}>Collection</Name>
      <Grow />
      <Eye />
    </Row>
    <Row>
      <Disclosure w={51} />
      <Badge>
        <Icon n="camera" s={13} c="#dd8c4e" />
      </Badge>
      <Name w={48}>Camera</Name>
      <Badge on>
        <Icon n="cameraData" s={13} c="#6fc487" />
      </Badge>
      <Grow />
      <Eye />
    </Row>
    <Row odd>
      <Disclosure w={51} />
      <Badge on>
        <Icon n="cone" s={12} c="#e08f55" />
      </Badge>
      <Name w={36} hot>
        Cube
      </Name>
      <Badge>
        <Icon n="mesh" s={12} c="#63b877" />
      </Badge>
      <Grow />
      <Eye />
    </Row>
    <Row>
      <Disclosure w={51} />
      <Badge>
        <Icon n="bulb" s={12} c="#dd8c4e" />
      </Badge>
      <Name w={36}>Light</Name>
      <Badge>
        <Icon n="point" s={12} c="#63b877" />
      </Badge>
      <Grow />
      <Eye />
    </Row>
    {Array.from({ length: 8 }, (_, i) => (
      <Row key={i} odd={i % 2 === 0} />
    ))}
  </Editor>
);

const Properties = () => (
  <Editor h={519} bg="#424242">
    <Header bg="#3a3a3a">
      <Chip w={24}>
        <Icon n="props" s={12} />
        <Chev />
      </Chip>
      <Fixed w={18} ml={13}>
        <Icon n="object" />
      </Fixed>
      <Fixed w={178}>Cube</Fixed>
      <Icon n="pin" s={12} c="#8c8c8c" />
    </Header>
    <PropsBody>
      <PropTabs>
        {propTabs.map((t) => (
          <PropTab key={t.n} active={t.active} mt={t.mt}>
            <Icon n={t.n} s={12} c={t.c} />
          </PropTab>
        ))}
      </PropTabs>
      <Panel>
        <NameRow>
          <Chip w={26} bg="#303030">
            <Icon n="object" s={11} />
            <Chev />
          </Chip>
          <Chip w={198} ml={1} bg="#1e1e1e" j="flex-start">
            <Fixed ml={4}>Cube</Fixed>
          </Chip>
        </NameRow>
        <PanelHeader>
          <Icon n="triDown" s={8} c="#aaa" />
          Transform
          <Grow />
          <Icon n="grip" s={12} c="#999" />
        </PanelHeader>
        <TransformBody>
          {fields.map((g, gi) => (
            <Group key={gi}>
              {g.map(([l, v]) => (
                <PropRow key={l}>
                  <PropLabel>{l}</PropLabel>
                  <Value>{v}</Value>
                  <Fixed w={12} ml={4}>
                    <Icon n="lock" s={12} c="#8f8f8f" />
                  </Fixed>
                  <Dot />
                </PropRow>
              ))}
            </Group>
          ))}
          <PropRow mt={2.5}>
            <PropLabel>Rotation Mode</PropLabel>
            <Chip w={86} bg="#2b2b2b" j="flex-start">
              <Fixed w={71} ml={5}>XYZ Euler</Fixed>
              <Chev />
            </Chip>
            <Fixed w={16} />
            <Dot />
          </PropRow>
          <SubPanel>
            <Icon n="tri" s={9} c="#aaa" />
            Delta Transform
          </SubPanel>
        </TransformBody>
        {panels.map((p) => (
          <PanelHeader key={p}>
            <Icon n="tri" s={9} c="#aaa" />
            {p}
            <Grow />
            <Icon n="grip" s={12} c="#999" />
          </PanelHeader>
        ))}
      </Panel>
    </PropsBody>
  </Editor>
);

const hints: [string, string, number][] = [
  ["mouseL", "Set 3D Cursor", 65],
  ["mouseLd", "Box Select", 85],
  ["mouseM", "Rotate View", 170],
  ["mouseR", "Select", 35],
  ["mouseRd", "Move", 60],
];

const HierarchyLines = styled.svg`
  position: absolute;
  left: 1384px;
  top: 327px;
`;

export default function App() {
  return (
    <>
      <Global />
      <Page>
        <AppWindow>
          <TitleBar>
            <Icon n="blender" s={11} c="#f0a660" />
            <TitleText>Blender</TitleText>
            <WinButton>
              <Icon n="min" s={10} c="#fff" />
            </WinButton>
            <WinButton>
              <Icon n="restore" s={10} c="#fff" />
            </WinButton>
            <WinButton>
              <Icon n="close" s={11} c="#fff" />
            </WinButton>
          </TitleBar>
          <TopMenu />
          <Main>
            <LeftColumn>
              <Viewport />
              <Timeline />
            </LeftColumn>
            <RightColumn>
              <Outliner />
              <Properties />
            </RightColumn>
          </Main>
          <StatusBar>
            {hints.map(([n, t, w]) => (
              <React.Fragment key={t}>
                <Fixed w={15}>
                  <Icon n={n} s={12} c="#b8b8b8" />
                </Fixed>
                <Fixed w={w} ml={5}>
                  {t}
                </Fixed>
              </React.Fragment>
            ))}
            <Grow />
            Collection | Cube | Verts:8 | Faces:6 | Tris:12 | Objects:1/3 | Mem: 38.9 MB | v2.80.75
          </StatusBar>
        </AppWindow>

        <HierarchyLines width="16" height="52" fill="none" stroke="#8e8e8e">
          <path d="M1.500 0v48M1.500 12.500h13M1.500 30h13M1.500 47.500h13" />
          <path d="M-1 10l5 2.500-5 2.500zM-1 27.500l5 2.500-5 2.500zM-1 45l5 2.500-5 2.500z" fill="#ccc" stroke="none" />
        </HierarchyLines>
        <Playhead>1</Playhead>

        <Leader x={845} y={98} r={849} b={244} />
        <Leader x={170} y={159} r={174} b={272} />
        <Leader x={1237.5} y={121} r={1241.5} b={268} />
        <Leader x={1094.5} y={184} r={1098.5} b={333} />
        <Leader x={1094.5} y={329} r={1160} b={333} />
        <Leader x={123} y={448} r={156} b={452} />
        <Outline x={281.5} y={242.5} r={870} b={277.5} />
        <Outline x={116} y={270} r={217} b={293} />
        <Outline x={77} y={295.5} r={123} b={557} />
        <Outline x={1116} y={265} r={1332} b={295} />
        <Outline x={1158} y={297} r={1333} b={380} />
        <Outline x={1338} y={268} r={1609.5} b={513} />
        <Outline x={1338} y={523} r={1609.5} b={1045} />
        <Outline x={83} y={1010} r={1334} b={1044} />
        <Outline x={632.5} y={985} r={768} b={1008} />
        <Callout x={631} base={88.5} size={51} ls={0.3}>Workspace Tab</Callout>
        <Callout x={108} base={152.5} size={51}>Mode</Callout>
        <Callout x={936.5} base={172} size={51}>Navigator</Callout>
        <Callout x={1206} base={110.5} size={51}>Shading</Callout>
        <Callout x={161.5} base={466.5} size={51}>Tool</Callout>
        <Callout x={1357.5} base={446.5} size={51}>hierarchy</Callout>
        <Callout x={1346} base={593} size={51}>Properties</Callout>
        <Callout x={485.5} base={670} size={118} ls={-0.5}>3D View</Callout>
        <Callout x={436.5} base={976.5} size={60} ls={0.1}>Play pause button</Callout>
        <Callout x={585} base={1109} size={60} ls={0}>Timeline</Callout>
      </Page>
    </>
  );
}
